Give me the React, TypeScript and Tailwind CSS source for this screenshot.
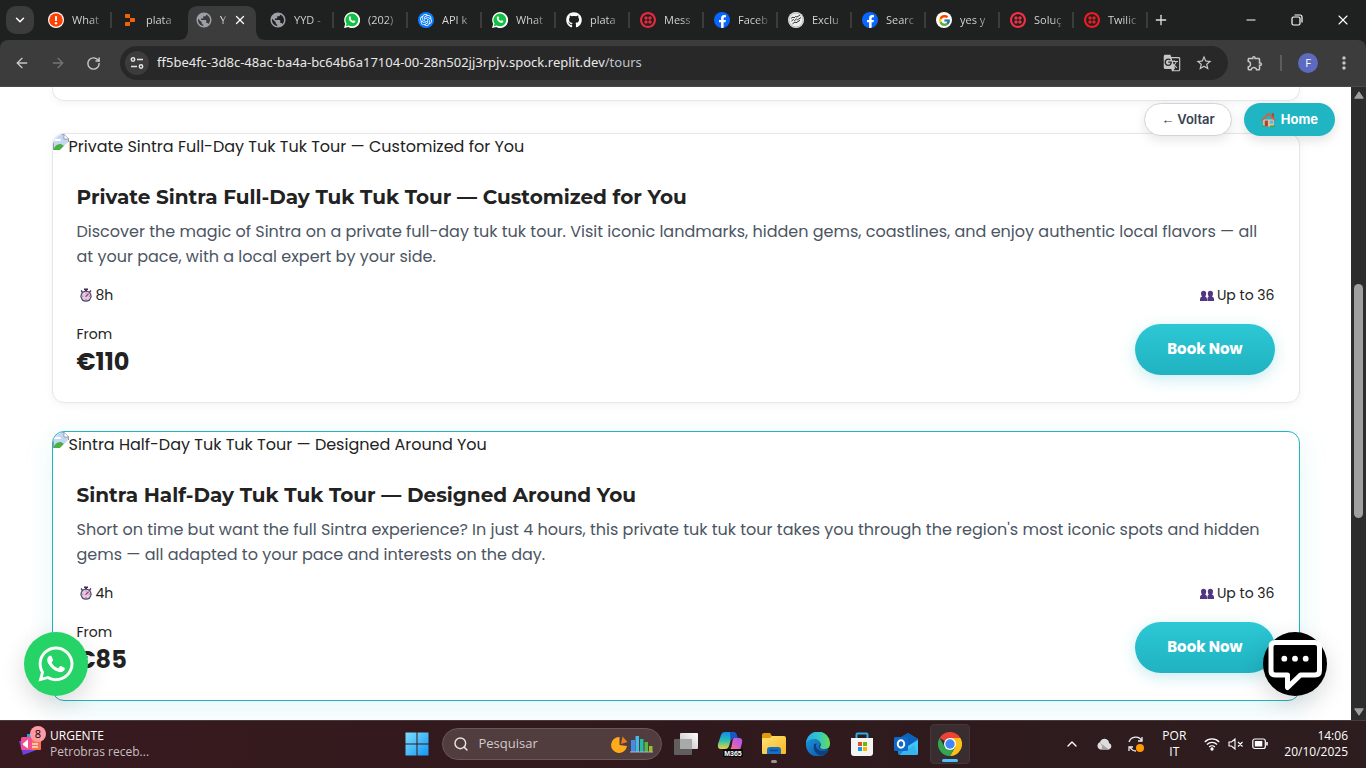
import type { ReactNode } from "react";
import { FaFacebookF, FaGithub, FaWhatsapp } from "react-icons/fa";
import { FcGoogle } from "react-icons/fc";
import { SiOpenai, SiReplit, SiTwilio } from "react-icons/si";
import { MdGTranslate, MdMoreVert, MdOutlineExtension, MdPublic, MdStarBorder } from "react-icons/md";
import { ArrowLeft, ArrowRight, ChevronDown, ChevronUp, Minus, Plus, RotateCw, Search, X } from "lucide-react";

function AlertIcon() {
  return (
    <svg viewBox="0 0 16 16" className="size-4">
      <circle cx="8" cy="8" r="8" fill="#fff" />
      <circle cx="8" cy="8" r="6.8" fill="#ff4000" />
      <rect x="7" y="4" width="2" height="5" rx=".6" fill="#fff" />
      <circle cx="8" cy="11.2" r="1.2" fill="#fff" />
    </svg>
  );
}

function WhatsIcon() {
  return (
    <svg viewBox="0 0 16 16" className="size-4">
      <path d="M0 16 1.2 12A8 8 0 1 1 4.2 15Z" fill="#fff" />
      <path d="M1.8 14.3 2.6 11.6A6.4 6.4 0 1 1 4.7 13.5Z" fill="#12c143" />
      <path d="M5.7 4.3c.4-.2.8 0 .9.4l.5 1.2-.6.9c.5 1 1.3 1.8 2.4 2.3l.8-.8 1.6.8c.3.9-.8 2-2 1.9C7 10.6 4.8 8.2 4.8 6c0-.7.4-1.4.9-1.7Z" fill="#fff" />
    </svg>
  );
}

function GlobeIcon() {
  return <MdPublic className="size-[18px] shrink-0 text-[#9aa0a6]" />;
}

function OpenAiIcon() {
  return (
    <span className="flex size-4 items-center justify-center rounded-full bg-[#0a7cff]">
      <SiOpenai className="size-3 text-white" />
    </span>
  );
}

function FbIcon() {
  return (
    <span className="flex size-4 items-end justify-center overflow-hidden rounded-full bg-[#0866ff]">
      <FaFacebookF className="size-[13px] text-white" />
    </span>
  );
}

function SealIcon() {
  return (
    <svg viewBox="0 0 16 16" className="size-4">
      <circle cx="8" cy="8" r="8" fill="#eee" />
      <circle cx="8" cy="8" r="7" stroke="#999" strokeWidth=".6" fill="none" />
      <path d="M3 6.5 5 5l1 1 1.5-1.5L9 5l3-2M3.500 9l2-1.500 1 1 2-1.500 1 .8L13 5.500M4.500 11.800 7 10l1 .8 4-2.500" stroke="#333" strokeWidth="1" fill="none" />
    </svg>
  );
}

const tabs: { icon: ReactNode; title: string; active?: boolean; divider?: boolean }[] = [
  { icon: <AlertIcon />, title: "What", divider: true },
  { icon: <SiReplit className="size-3 text-[#f26207]" />, title: "plata" },
  { icon: <GlobeIcon />, title: "Y", active: true },
  { icon: <GlobeIcon />, title: "YYD -", divider: true },
  { icon: <WhatsIcon />, title: "(202)", divider: true },
  { icon: <OpenAiIcon />, title: "API k", divider: true },
  { icon: <WhatsIcon />, title: "What", divider: true },
  { icon: <FaGithub className="size-4 text-white" />, title: "plata", divider: true },
  { icon: <SiTwilio className="size-4 text-[#e8283f]" />, title: "Mess", divider: true },
  { icon: <FbIcon />, title: "Faceb", divider: true },
  { icon: <SealIcon />, title: "Exclu", divider: true },
  { icon: <FbIcon />, title: "Searc", divider: true },
  {
    icon: (
      <span className="flex size-4 items-center justify-center rounded-full bg-white">
        <FcGoogle className="size-[13px]" />
      </span>
    ),
    title: "yes y",
    divider: true,
  },
  { icon: <SiTwilio className="size-4 text-[#f22f46]" />, title: "Soluç", divider: true },
  { icon: <SiTwilio className="size-4 text-[#ed1c24]" />, title: "Twilic", divider: true },
];

function TabStrip() {
  return (
    <div className="flex h-10 shrink-0 items-center bg-[#1f2120] pl-1.5">
      <button aria-label="Search tabs" className="flex size-7 shrink-0 items-center justify-center rounded-[10px] bg-[#3c3c3c]">
        <ChevronDown className="size-3.5 text-white" strokeWidth={2.5} />
      </button>
      <div role="tablist" className="ml-1 flex h-10 min-w-0 items-center">
        {tabs.map((t, i) =>
          t.active ? (
            <div key={i} role="tab" aria-selected="true" className="relative flex h-10 w-[74px] min-w-0 items-center">
              <svg viewBox="0 0 88 34" className="absolute -left-2 bottom-0 h-[34px] w-[88px]">
                <path d="M0 34Q10 34 10 24V10Q10 0 20 0H68Q78 0 78 10V24Q78 34 88 34Z" fill="#3c3c3c" />
              </svg>
              <span className="relative ml-2.5 flex size-4 shrink-0 items-center justify-center">{t.icon}</span>
              <span className="relative ml-2 w-2 bg-gradient-to-r from-white from-20% to-transparent bg-clip-text text-[11px] leading-4 text-transparent">{t.title}</span>
              <button aria-label="Close tab" className="relative ml-[5px]">
                <X className="size-3.5 text-white" strokeWidth={2.2} />
              </button>
            </div>
          ) : (
            <div key={i} role="tab" aria-selected="false" className="flex w-[74px] min-w-0 items-center pl-2.5">
              <span className="flex size-4 shrink-0 items-center justify-center">{t.icon}</span>
              <span className="ml-2 min-w-0 flex-1 whitespace-nowrap bg-gradient-to-r from-[#dcdcdc] from-60% to-[#4a4a4a] bg-clip-text text-[11px] leading-4 text-transparent">
                {t.title}
              </span>
              <span className={t.divider ? "ml-2 h-4 w-0.5 bg-[#3c3c3c]" : "ml-2 w-0.5"} />
            </div>
          ),
        )}
      </div>
      <button aria-label="New tab" className="ml-[5px]">
        <Plus className="size-4 text-[#dedede]" strokeWidth={2} />
      </button>
      <div className="ml-auto flex items-center text-white">
        <button aria-label="Minimize" className="flex w-[46px] justify-center"><Minus className="size-3.5" strokeWidth={1.7} /></button>
        <button aria-label="Restore" className="flex w-[46px] justify-center">
          <svg viewBox="0 0 12 12" className="size-3" fill="none" stroke="currentColor" strokeWidth="1.2">
            <rect x="1" y="3" width="8" height="8" rx="1.5" />
            <path d="M3.500 1H9a2 2 0 0 1 2 2v5.500" />
          </svg>
        </button>
        <button aria-label="Close" className="flex w-[46px] justify-center"><X className="size-4" strokeWidth={1.7} /></button>
      </div>
    </div>
  );
}

function Toolbar() {
  return (
    <div className="bg-[#1f2120]">
      <div className="flex h-[47px] items-center rounded-t-lg border-b border-[#4a4a4a] bg-[#3c3c3c] pl-3.5 text-[#c7c7c7]">
        <button aria-label="Back"><ArrowLeft className="size-4" /></button>
        <button aria-label="Forward" className="ml-5 text-[#757575]"><ArrowRight className="size-4" /></button>
        <button aria-label="Reload" className="ml-5"><RotateCw className="size-[15px]" strokeWidth={2.3} /></button>
        <div className="ml-[19px] flex h-[34px] min-w-0 flex-1 items-center rounded-full bg-[#282828] pl-[5px] pr-[15px]">
          <button aria-label="Site information" className="flex size-6 shrink-0 items-center justify-center rounded-full bg-[#3c3c3c]">
            <svg viewBox="0 0 14 14" className="size-3.5" fill="none" stroke="#e3e3e3" strokeWidth="1.5">
              <circle cx="3" cy="3.5" r="1.7" />
              <path d="M7 3.500h6M1 10.500h6" />
              <circle cx="11" cy="10.5" r="1.7" />
            </svg>
          </button>
          <div className="ml-2 min-w-0 flex-1 truncate font-['Segoe_UI','Noto_Sans',sans-serif] text-[13px] text-[#c0c4c8]">
            <span className="text-[#e8e8e8]">ff5be4fc-3d8c-48ac-ba4a-bc64b6a17104-00-28n502jj3rpjv.spock.replit.dev</span>/tours
          </div>
          <button aria-label="Translate"><MdGTranslate className="size-[18px]" /></button>
          <button aria-label="Bookmark" className="ml-3.5"><MdStarBorder className="size-[18px]" /></button>
        </div>
        <button aria-label="Extensions" className="ml-[18px]"><MdOutlineExtension className="size-[18px]" /></button>
        <span className="ml-4 h-4 w-0.5 bg-[#5c5c5c]" />
        <button aria-label="Profile" className="ml-4 flex size-5 items-center justify-center rounded-full bg-[#5c6bc0] text-[11px] text-white">F</button>
        <button aria-label="Menu" className="ml-4 mr-3"><MdMoreVert className="size-5" /></button>
      </div>
    </div>
  );
}

function BrokenImage() {
  return (
    <svg viewBox="0 0 16 16" className="size-4 shrink-0">
      <path d="M0 0h11l5 5v11H0Z" fill="#c3d7f3" />
      <path d="M1 7q1-3 4-2 3-1 3 2Z" fill="#fff" />
      <path d="M0 16q3-7 8-6l3 2-4 4Z" fill="#4caf3f" />
      <path d="M7 16 16 7v9Z" fill="#fff" />
      <path d="M11 0v5h5M.5 16V.5H11l4.500 4.500v3" stroke="#8c99a8" fill="none" />
      <path d="M11.500 1v3.500H15Z" fill="#fff" />
    </svg>
  );
}

function Stopwatch() {
  return (
    <svg viewBox="0 0 14 14" className="size-3.5">
      <path d="M5 .5h4v1.500H8V4H6V2H5Z" fill="#402b59" />
      <path d="m2 2.500 1.500 1.500M12 2.500 10.500 4" stroke="#402b59" strokeWidth="1.3" />
      <circle cx="7" cy="8.2" r="5.6" fill="#51406b" />
      <circle cx="7" cy="8.2" r="4.4" fill="#d9d1e2" />
      <path d="M7 4.500v1M7 11v1M3.300 8.200h1M9.800 8.200h1" stroke="#6c5a82" strokeWidth=".8" />
      <path d="m6.500 8.700 3-3" stroke="#e2245e" strokeWidth="1.3" />
    </svg>
  );
}

function People() {
  return (
    <svg viewBox="0 0 14 12" className="h-3 w-3.5" fill="#533681">
      <path d="M1 4.500a2.600 2.700 0 1 1 5.200 0q0 2-1 3Q7 8 7 10v2H0v-2Q0 8 2 7.500q-1-1-1-3Z" />
      <path d="M7.800 4.500a2.600 2.700 0 1 1 5.200 0q0 2-1 3 2 .5 2 2.500v2H7.400v-2q0-1.800 1.400-2.500-1-1-1-3Z" />
    </svg>
  );
}

interface Tour {
  title: string;
  description: string;
  duration: string;
  price: string;
  featured?: boolean;
}

const tours: Tour[] = [
  {
    title: "Private Sintra Full-Day Tuk Tuk Tour — Customized for You",
    description:
      "Discover the magic of Sintra on a private full-day tuk tuk tour. Visit iconic landmarks, hidden gems, coastlines, and enjoy authentic local flavors — all at your pace, with a local expert by your side.",
    duration: "8h",
    price: "€110",
  },
  {
    title: "Sintra Half-Day Tuk Tuk Tour — Designed Around You",
    description:
      "Short on time but want the full Sintra experience? In just 4 hours, this private tuk tuk tour takes you through the region's most iconic spots and hidden gems — all adapted to your pace and interests on the day.",
    duration: "4h",
    price: "€85",
    featured: true,
  },
];

function TourCard({ tour }: { tour: Tour }) {
  return (
    <article
      className={
        tour.featured
          ? "rounded-xl border border-[#20b5c3] bg-white shadow-[0_8px_30px_rgba(32,181,195,0.12)]"
          : "rounded-xl border border-[#e5e7eb] bg-white shadow-[0_2px_8px_rgba(0,0,0,0.05)]"
      }
    >
      <div className="flex h-6 items-start overflow-hidden rounded-tl-xl text-base leading-[26px]">
        <BrokenImage />
        <span>{tour.title}</span>
      </div>
      <div className="px-6 pb-[22px] pt-[25px]">
        <h2 className="font-['Montserrat','Poppins','Inter',sans-serif] text-xl font-bold leading-7">{tour.title}</h2>
        <p className="mt-2 text-base leading-[25px] text-[#4b5563]">{tour.description}</p>
        <div className="mt-4 flex justify-between text-sm leading-5">
          <span className="flex items-center gap-[3px] pl-0.5"><Stopwatch />{tour.duration}</span>
          <span className="flex items-center gap-[3px]"><People />Up to 36</span>
        </div>
        <div className="mt-[19px] flex items-start justify-between">
          <div>
            <div className="text-sm leading-5">From</div>
            <div className="text-2xl font-bold leading-9">{tour.price}</div>
          </div>
          <button className="h-[51px] rounded-full bg-gradient-to-b from-[#2dc8d5] to-[#20b2c1] px-8 text-[15px] font-bold text-white shadow-[0_4px_15px_rgba(32,181,195,0.25)]">
            Book Now
          </button>
        </div>
      </div>
    </article>
  );
}

function Page() {
  return (
    <div className="relative min-w-0 flex-1 overflow-hidden bg-white font-['Poppins','Inter',sans-serif] text-[#222222]">
      <main className="mx-auto max-w-[1280px] px-4">
        <div className="h-3.5 rounded-b-xl border border-t-0 border-[#e5e7eb] shadow-[0_2px_8px_rgba(0,0,0,0.05)]" />
        <div className="mt-8 flex flex-col gap-7">
          {tours.map((t) => <TourCard key={t.title} tour={t} />)}
        </div>
      </main>
      <nav className="absolute right-4 top-4 flex gap-3 font-['Inter',sans-serif] text-[13px] font-semibold">
        <button className="flex h-[33px] items-center gap-[3px] rounded-full border border-[#d1d5db] bg-white px-4 text-[#374151] shadow-[0_4px_12px_rgba(0,0,0,0.1)]">
          <span className="font-['Liberation_Sans',sans-serif] font-normal">←</span>Voltar
        </button>
        <a href="#home" className="flex h-[33px] items-center gap-[5px] rounded-full bg-[#20b5c3] px-[17px] font-bold text-white shadow-[0_4px_12px_rgba(0,0,0,0.12)]">
          <svg viewBox="0 0 14 14" className="size-[15px]">
            <path d="M2 7h10v6.500H2Z" fill="#f3bd91" />
            <path d="M10 1h2v5h-2Z" fill="#a84b38" />
            <path d="M3.500 8h3v5.500h-3Z" fill="#9d4a3a" />
            <path d="M8.200 8h3v3h-3Z" fill="#56b9ed" />
            <path d="M0 7.500 6.500 1h1L14 7.500l-1 1-6-5.500-6 5.500Z" fill="#d65f43" />
            <path d="M1.500 12.500h2v1.500h-2Zm7 0H13V14H8.500Z" fill="#4c9b42" />
          </svg>
          Home
        </a>
      </nav>
      <a href="#whatsapp" aria-label="WhatsApp" className="absolute bottom-6 left-6 flex size-16 items-center justify-center rounded-full bg-[#25d366] shadow-[0_8px_24px_rgba(0,0,0,0.15)]">
        <FaWhatsapp className="size-10 text-white" />
      </a>
      <button aria-label="Chat" className="absolute bottom-6 right-6 size-16 rounded-full bg-black shadow-[0_8px_24px_rgba(0,0,0,0.15)]">
        <svg viewBox="0 0 64 64" className="size-16" fill="none">
          <path d="M12 10.500H52Q56.500 10.500 56.500 15V38.500Q56.500 43 52 43H37.500L24.500 55.500V43H12Q8 43 8 38.500V15Q8 10.500 12 10.500Z" stroke="#fff" strokeWidth="5" strokeLinejoin="round" />
          <g fill="#fff">
            <circle cx="21.3" cy="26.7" r="2.9" />
            <circle cx="32" cy="26.7" r="2.9" />
            <circle cx="42.7" cy="26.7" r="2.9" />
          </g>
        </svg>
      </button>
    </div>
  );
}

function Scrollbar() {
  return (
    <div aria-hidden="true" className="flex w-[15px] shrink-0 flex-col items-center bg-[#2c2c2c] py-1">
      <svg viewBox="0 0 10 8" className="h-2 w-2.5"><path d="M5 .8 9.300 7.200H.7Z" fill="#9f9f9f" stroke="#9f9f9f" strokeLinejoin="round" /></svg>
      <div className="grow-[185]" />
      <div className="w-[9px] grow-[234] rounded-full bg-[#9f9f9f]" />
      <div className="grow-[190]" />
      <svg viewBox="0 0 10 8" className="h-2 w-2.5"><path d="M5 7.200 9.300.8H.7Z" fill="#9f9f9f" stroke="#9f9f9f" strokeLinejoin="round" /></svg>
    </div>
  );
}

function TaskViewIcon() {
  return (
    <svg viewBox="0 0 24 24" className="size-6">
      <defs>
        <linearGradient id="tv" x1="0" y1="1" x2="1" y2="0"><stop stopColor="#bbb" /><stop offset="1" stopColor="#fff" /></linearGradient>
      </defs>
      <rect x="6" y="1" width="18" height="16" rx="1" fill="url(#tv)" />
      <rect x="0" y="7" width="18" height="16" rx="1" fill="#666" opacity=".9" />
      <rect x="6" y="7" width="12" height="10" fill="#a9a9a9" />
    </svg>
  );
}

function CopilotIcon() {
  return (
    <svg viewBox="0 0 26 26" className="size-[26px]">
      <defs>
        <linearGradient id="cp1" x1="0" y1="0" x2="0" y2="1"><stop stopColor="#138cf0" /><stop offset=".5" stopColor="#28c0b0" /><stop offset="1" stopColor="#eed13c" /></linearGradient>
        <linearGradient id="cp2" x1="1" y1="0" x2="0" y2="1"><stop stopColor="#a45af5" /><stop offset=".5" stopColor="#d65ccb" /><stop offset="1" stopColor="#ff8260" /></linearGradient>
      </defs>
      <path d="M8 1h8q3 0 4 4l.5 2h-4q-2 0-3 3l-1.500 5q-1 3-4 3H4q-4 0-3-5L4 4q1-3 4-3Z" fill="url(#cp1)" />
      <path d="M13 1h3q3 0 4 4l.5 2h-4q-2 0-3 3Z" fill="#1556c8" />
      <path d="M17 7h5q4 0 3 5l-2 7H12q2-1 2.500-3l1-6q.5-3 1.500-3Z" fill="url(#cp2)" />
      <rect x="6" y="18" width="20" height="8" fill="#0a0a0a" />
      <text x="16" y="24.6" textAnchor="middle" fontSize="7" fontWeight="700" fill="#fff" fontFamily="Liberation Sans, sans-serif">M365</text>
    </svg>
  );
}

function FolderIcon() {
  return (
    <svg viewBox="0 0 24 24" className="size-6">
      <defs><linearGradient id="fd" x1="0" y1="0" x2="1" y2="1"><stop stopColor="#ffe27a" /><stop offset="1" stopColor="#f8b91c" /></linearGradient></defs>
      <path d="M0 3q0-2 2-2h6l2 3h11v5H0Z" fill="#e29a05" />
      <path d="M0 7q0-1 1-1h7l2-2h12q2 0 2 2v15q0 1-1 1H1q-1 0-1-1Z" fill="url(#fd)" />
      <path d="M5 22v-4q0-3 3-3h8q3 0 3 3v4Z" fill="#1670c4" />
      <path d="M8 18.500h8" stroke="#0b4b91" strokeWidth="1.5" />
    </svg>
  );
}

function EdgeIcon() {
  return (
    <svg viewBox="0 0 24 24" className="size-6">
      <defs>
        <linearGradient id="eg1" x1="0" y1="0" x2="1" y2="0"><stop stopColor="#28a9e8" /><stop offset=".55" stopColor="#30c8c8" /><stop offset="1" stopColor="#6bdd4e" /></linearGradient>
        <linearGradient id="eg2" x1="0" y1="0" x2="1" y2="1"><stop stopColor="#1b94dc" /><stop offset="1" stopColor="#0c4f9f" /></linearGradient>
      </defs>
      <path d="M0 11Q2 4 9 7q5 1 5 5 0 2-1 3 1 2 5 2 4 0 5 .5A12 12 0 0 1 0 12Z" fill="url(#eg2)" />
      <path d="M8 12q-2 9 7 11.500 5-.8 8-6-8 3.500-12-1-2-2.500 0-5Z" fill="#103f7f" />
      <path d="M0 11A12 12 0 0 1 24 12q0 5-5.500 5-5 0-4.500-2.500 1.500-1.500 0-4Q12 6.500 7 7 2 7.500 0 11Z" fill="url(#eg1)" />
    </svg>
  );
}

function StoreIcon() {
  return (
    <svg viewBox="0 0 24 24" className="size-6">
      <path d="M6.500 7V2.500q0-1 1-1h9q1 0 1 1V7" fill="none" stroke="#2aaee8" strokeWidth="2" />
      <path d="M1 6h22v15q0 3-3 3H4q-3 0-3-3Z" fill="#f4f4f4" />
      <path d="M8 10h4v4H8Z" fill="#e84a28" /><path d="M13 10h4v4h-4Z" fill="#70b700" />
      <path d="M8 15h4v4H8Z" fill="#109ce5" /><path d="M13 15h4v4h-4Z" fill="#f8b500" />
    </svg>
  );
}

function OutlookIcon() {
  return (
    <svg viewBox="0 0 24 24" className="size-6">
      <path d="m4 7 10-6 10 6v14q0 2-2 2H6q-2 0-2-2Z" fill="#1689df" />
      <path d="m7 5 7-4 10 6-10 7Z" fill="#0b62ba" />
      <path d="m14 14 10-6v13q0 2-2 2H6Z" fill="#42c4f5" />
      <path d="m6 23 14-10 4 9-1 1Z" fill="#32aeee" opacity=".7" />
      <rect x="0" y="5" width="14" height="14" rx="1.5" fill="#1068c8" />
      <ellipse cx="7" cy="12" rx="3.2" ry="3.8" fill="none" stroke="#fff" strokeWidth="2" />
    </svg>
  );
}

function ChromeIcon() {
  return (
    <svg viewBox="0 0 24 24" className="size-6">
      <path d="M12 12 1.600 6A12 12 0 0 1 22.400 6H12Z" fill="#e94435" />
      <path d="M12 6h10.400A12 12 0 0 1 12 24l5.200-9Z" fill="#fbc116" />
      <path d="M1.600 6 6.800 15 12 18l5.200-3L12 24A12 12 0 0 1 1.600 6Z" fill="#34a552" />
      <circle cx="12" cy="12" r="6" fill="#fff" />
      <circle cx="12" cy="12" r="4.7" fill="#4285f4" />
    </svg>
  );
}

const apps: { name: string; icon: ReactNode; marker?: string; active?: boolean }[] = [
  { name: "Task view", icon: <TaskViewIcon /> },
  { name: "Microsoft 365 Copilot", icon: <CopilotIcon /> },
  { name: "File Explorer", icon: <FolderIcon />, marker: "absolute bottom-px h-[3px] w-1.5 rounded-full bg-[#9b9294]" },
  { name: "Edge", icon: <EdgeIcon /> },
  { name: "Store", icon: <StoreIcon /> },
  { name: "Outlook", icon: <OutlookIcon /> },
  { name: "Chrome", icon: <ChromeIcon />, marker: "absolute bottom-px h-[3px] w-4 rounded-full bg-[#4cc2ff]", active: true },
];

function Taskbar() {
  return (
    <footer className="flex h-12 shrink-0 items-center bg-gradient-to-r from-[#381a1f] via-[#30191c] via-50% to-[#2d1d1f] text-xs text-white shadow-[inset_0_1px_0_#4a3b3c]">
      <div className="flex flex-1 items-center pl-[18px]">
        <div className="relative size-6">
          <svg viewBox="0 0 24 24" className="size-6">
            <path d="M1 9h4l13 9-2 1-11 4Z" fill="#6a45e0" />
            <path d="M9 2h8v8H9Z" fill="#20a4e8" />
            <rect x="3" y="5" width="20" height="13" rx="1.5" fill="#f1508d" />
            <path d="M14 5h7.500q1.500 0 1.500 1.500v10q0 1.500-1.500 1.500H14Z" fill="#f57355" />
            <path d="m5 11.500 5-4v9l-5-3.500Z" fill="#fff" /><path d="M14 12h6M14 15h6" stroke="#ffe0d0" strokeWidth="1.3" />
          </svg>
          <span className="absolute -right-1 -top-1.5 flex size-4 items-center justify-center rounded-full bg-[#ff99a4] text-[11px] text-black">8</span>
        </div>
        <div className="ml-2 leading-4">
          <div>URGENTE</div>
          <div className="text-[#c9bfc1]">Petrobras receb...</div>
        </div>
      </div>
      <div className="flex items-center">
        <button aria-label="Start" className="flex size-10 items-center justify-center">
          <svg viewBox="0 0 24 24" className="size-6">
            <defs><linearGradient id="wn" gradientUnits="userSpaceOnUse" x1="0" y1="0" x2="24" y2="24"><stop stopColor="#80deff" /><stop offset="1" stopColor="#1096f0" /></linearGradient></defs>
            <path d="M.5.5h11v11H.5Zm12 0h11v11h-11Zm-12 12h11v11H.5Zm12 0h11v11h-11Z" fill="url(#wn)" />
          </svg>
        </button>
        <label className="ml-[5px] flex h-8 w-[220px] items-center rounded-full border border-[#69575a] bg-[#513c3e] pl-2.5 pr-2">
          <Search className="size-4 shrink-0 text-[#e8e2e3]" strokeWidth={2.2} />
          <input aria-label="Pesquisar" placeholder="Pesquisar" className="ml-2.5 w-0 min-w-0 flex-1 bg-transparent text-[13px] text-white outline-none placeholder:text-[#d2cbcc]" />
          <svg viewBox="0 0 42 18" className="h-[18px] w-[42px] shrink-0">
            <path d="M8.500 2v8l7.500 1A8 8 0 1 1 8.500 2Z" fill="#ffab1a" />
            <path d="m10 9 1.500-7.500 5 5.500Z" fill="#e97c20" />
            <path d="M20 5h4v12h-4Z" fill="#438be8" /><path d="M24.500 1h3.500v16h-3.500Z" fill="#45b9e8" />
            <path d="M29 4h3.500v13H29Z" fill="#27bca1" /><path d="M33.500 7h3.500v10h-3.500Z" fill="#55b847" /><path d="M38 11h3.500v6H38Z" fill="#a2bc23" />
            <path d="M19 17h23" stroke="#a4b5d6" />
          </svg>
        </label>
        <div className="ml-1 flex gap-1">
          {apps.map((a) => (
            <button
              key={a.name}
              aria-label={a.name}
              className={
                a.active
                  ? "relative flex size-10 items-center justify-center rounded border border-[#43373a] bg-[#3a2d2f]"
                  : "relative flex size-10 items-center justify-center"
              }
            >
              {a.icon}
              {a.marker && <span className={a.marker} />}
            </button>
          ))}
        </div>
      </div>
      <div className="flex flex-1 items-center justify-end pr-[18px]">
        <button aria-label="Hidden icons"><ChevronUp className="size-4" /></button>
        <svg viewBox="0 0 16 12" className="ml-4 h-3 w-4">
          <path d="M4 11.500a4 4 0 0 1 0-7.500Q6 0 10 1q3 1 3 4a3.400 3.400 0 0 1 0 6.500Z" fill="#ddd" />
          <path d="m3 4 10 7.500H5Q8 8 3 4Z" fill="#a7a3a3" />
        </svg>
        <svg viewBox="0 0 18 18" className="ml-[15px] size-[18px]" fill="none" stroke="#eee" strokeWidth="1.3">
          <path d="M2 7a7 7 0 0 1 13-1M15 2v4h-4M2 16v-4h4M3 12q2 4 6 4" />
          <circle cx="13" cy="13" r="4" fill="#ff9800" stroke="none" />
        </svg>
        <div className="ml-[17px] text-center leading-4"><div>POR</div><div>IT</div></div>
        <svg viewBox="0 0 16 14" className="ml-[18px] h-3.5 w-4" fill="none" stroke="#fff" strokeWidth="1.3">
          <path d="M.8 5a10 10 0 0 1 14.400 0M3 7.500a7 7 0 0 1 10 0M5.200 10a4 4 0 0 1 5.600 0" /><circle cx="8" cy="12" r="1" fill="#fff" />
        </svg>
        <svg viewBox="0 0 16 14" className="ml-2 h-3.5 w-4" fill="none" stroke="#fff" strokeWidth="1.1">
          <path d="M1 5h2.500L7 2v10L3.500 9H1ZM10 5l4.500 4.500M14.500 5 10 9.500" />
        </svg>
        <svg viewBox="0 0 16 12" className="ml-2 h-3 w-4" fill="none" stroke="#fff" strokeWidth="1.2">
          <rect x=".8" y="1" width="12.5" height="9.5" rx="2" /><rect x="2.8" y="3" width="7.5" height="5.5" fill="#fff" stroke="none" /><path d="M15 4v3.500" strokeWidth="1.6" />
        </svg>
        <div className="ml-4 text-right leading-4"><div>14:06</div><div>20/10/2025</div></div>
      </div>
    </footer>
  );
}

export default function App() {
  return (
    <div className="flex h-screen flex-col overflow-hidden font-['Segoe_UI','Open_Sans',sans-serif]">
      <TabStrip />
      <Toolbar />
      <div className="flex min-h-0 flex-1">
        <Page />
        <Scrollbar />
      </div>
      <Taskbar />
    </div>
  );
}
